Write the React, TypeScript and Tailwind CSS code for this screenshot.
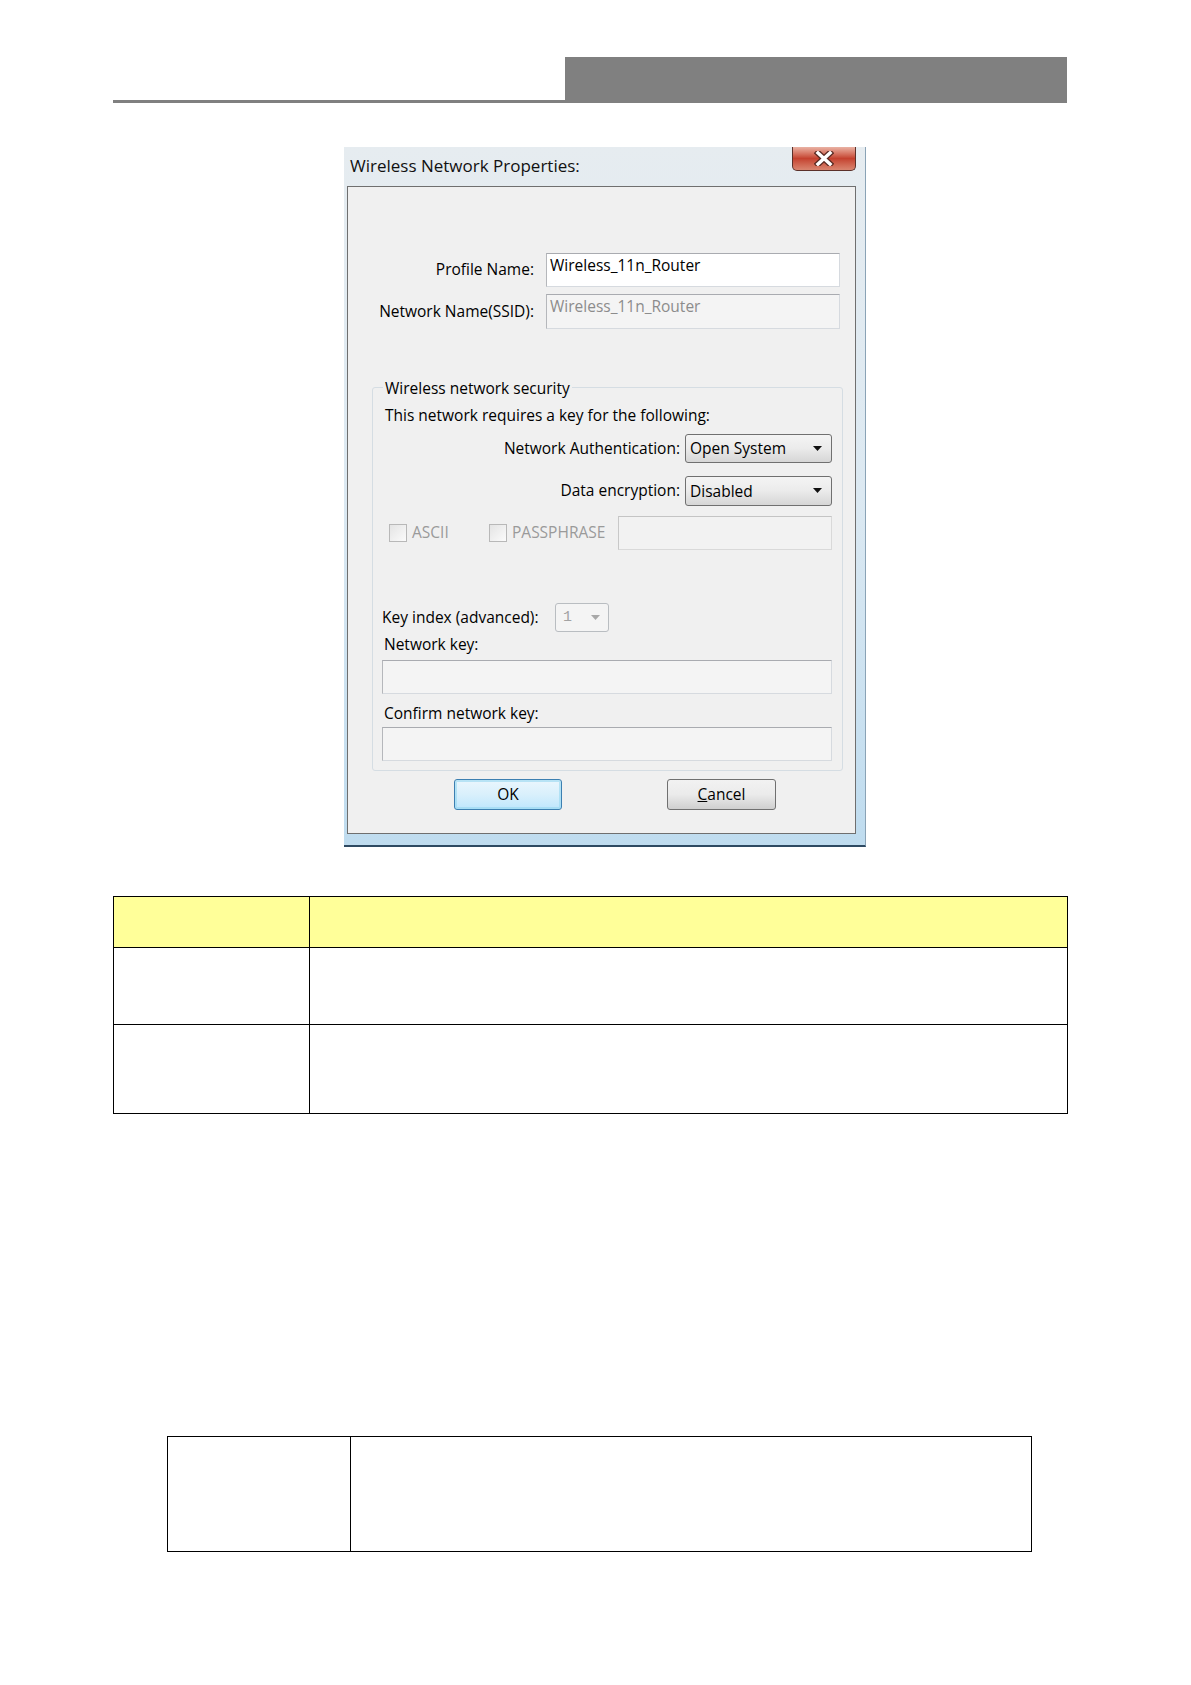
import React from 'react'

const ui = "font-['Open_Sans','Noto_Sans',sans-serif]"

function Select({ value, width }: { value: string; width: string }) {
  return (
    <div
      className={`${width} h-[29px] flex items-center justify-between pl-[4px] pr-[9px] rounded-[3px] border border-[#707070] bg-gradient-to-b from-[#f4f4f4] via-[#ebebeb] to-[#d6d6d6] text-[15.5px] text-black`}
    >
      <span className="leading-none pt-[1px]">{value}</span>
      <svg width="9" height="5" viewBox="0 0 9 5">
        <path d="M0 0h9L4.5 5z" fill="#111" />
      </svg>
    </div>
  )
}

function Checkbox({ label }: { label: string }) {
  return (
    <div className="flex items-center">
      <div className="w-[18px] h-[18px] border border-[#b8b8b8] bg-gradient-to-br from-[#e4e4e4] to-[#fbfbfb]" />
      <span className="ml-[5px] text-[15.5px] text-[#9a9a9a]">{label}</span>
    </div>
  )
}

function TextBox({ value, disabled, className }: { value?: string; disabled?: boolean; className: string }) {
  return (
    <div
      className={`${className} h-[34px] border border-[#d6dadf] border-t-[#a9abb0] border-l-[#b5b7bb] px-[3px] pt-[1px] text-[15.5px] leading-[20px] ${
        disabled ? 'bg-[#f4f4f4] text-[#8c8c8c]' : 'bg-white text-black'
      }`}
    >
      {value}
    </div>
  )
}

function Dialog() {
  return (
    <div className={`${ui} w-[522px] h-[700px] ml-[344px] mt-[44px] flex flex-col pl-[3px] pr-[9px] pb-[11px] bg-gradient-to-b from-[#e6ecf0] via-[#dce9f2] to-[#bfdcef] border-r border-r-[#8aa3b6] border-b-2 border-b-[#2e4a62]`}>
      {/* title bar */}
      <div className="h-[39px] flex items-start justify-between">
        <span className="ml-[3px] mt-[6px] text-[17px] text-[#111]">Wireless Network Properties:</span>
        <div className="w-[64px] h-[24px] rounded-b-[5px] border border-t-0 border-[#5b3029] bg-gradient-to-b from-[#e9b2a4] via-[#c4412f] to-[#d98570] flex items-center justify-center">
          <svg width="20" height="15" viewBox="0 0 20 15">
            <path d="M4 2l12 11M16 2L4 13" stroke="#5a2a22" strokeWidth="6" strokeLinecap="square" />
            <path d="M4 2l12 11M16 2L4 13" stroke="#fff" strokeWidth="3.5" strokeLinecap="square" />
          </svg>
        </div>
      </div>

      {/* client area */}
      <div className="h-[650px] border border-[#6f6f6f] bg-[#f0f0f0] text-[15.5px] text-black">
        <div className="mt-[66px] flex items-center">
          <div className="w-[186px] text-right">Profile Name:</div>
          <TextBox value="Wireless_11n_Router" className="ml-[12px] w-[294px]" />
        </div>
        <div className="mt-[7px] flex items-center">
          <div className="w-[186px] text-right">Network Name(SSID):</div>
          <TextBox value="Wireless_11n_Router" disabled className="ml-[12px] w-[294px] h-[35px]" />
        </div>

        <fieldset className="ml-[24px] mt-[49px] w-[465px] border border-[#d5dde3] rounded-[3px] px-[10px] pb-[9px]">
          <legend className="px-[2px] leading-[20px]">Wireless network security</legend>
          <div className="mt-[7px] pl-[2px] leading-[20px]">This network requires a key for the following:</div>
          <div className="mt-[9px] flex items-center justify-end">
            <span className="mr-[5px]">Network Authentication:</span>
            <Select value="Open System" width="w-[147px]" />
          </div>
          <div className="mt-[13px] flex items-center justify-end">
            <span className="mr-[5px]">Data encryption:</span>
            <Select value="Disabled" width="w-[147px] h-[30px]" />
          </div>
          <div className="mt-[10px] flex items-center">
            <div className="w-[106px] pl-[6px]">
              <Checkbox label="ASCII" />
            </div>
            <div className="flex-1">
              <Checkbox label="PASSPHRASE" />
            </div>
            <div className="w-[214px] h-[34px] border border-[#d9d9d9] border-t-[#c4c4c4] border-l-[#c8c8c8] bg-[#f2f2f2]" />
          </div>
          <div className="mt-[53px] flex items-center">
            <span className="w-[173px] -ml-[1px]">Key index (advanced):</span>
            <div className="w-[54px] h-[29px] flex items-center justify-between pl-[7px] pr-[8px] rounded-[3px] border border-[#b9bdc1] bg-[#f4f4f4]">
              <span className="font-['Liberation_Mono',monospace] text-[15px] text-[#a3a3a3] pt-[2px]">1</span>
              <svg width="9" height="5" viewBox="0 0 9 5">
                <path d="M0 0h9L4.5 5z" fill="#a8a8a8" />
              </svg>
            </div>
          </div>
          <div className="mt-[2px] pl-[1px] leading-[20px]">Network key:</div>
          <TextBox disabled className="mt-[6px] -ml-[1px] w-[450px]" />
          <div className="mt-[9px] pl-[1px] leading-[20px]">Confirm network key:</div>
          <TextBox disabled className="mt-[4px] -ml-[1px] w-[450px]" />
        </fieldset>

        <div className="mt-[8px] flex">
          <button className="ml-[106px] w-[108px] h-[31px] rounded-[3px] border border-[#3c7fb1] bg-gradient-to-b from-[#eaf6fd] via-[#d9f0fc] to-[#bee6fd] shadow-[inset_0_0_0_2px_rgba(150,215,240,0.6)] text-[15.5px] text-black">
            OK
          </button>
          <button className="ml-[105px] w-[109px] h-[31px] rounded-[3px] border border-[#707070] bg-gradient-to-b from-[#f2f2f2] via-[#ebebeb] to-[#cfcfcf] text-[15.5px] text-black">
            <span className="underline">C</span>ancel
          </button>
        </div>
      </div>
    </div>
  )
}

export default function App() {
  return (
    <div className="w-[1191px] min-h-[1685px] bg-white pt-[57px]">
      {/* page header */}
      <div className="ml-[113px] flex items-end">
        <div className="w-[452px] h-[3px] bg-[#808080]" />
        <div className="w-[502px] h-[46px] bg-[#808080]" />
      </div>

      <Dialog />

      <table className="ml-[113px] mt-[49px] w-[955px] border-collapse">
        <tbody>
          <tr className="h-[51px] bg-[#ffff99]">
            <td className="w-[196px] border border-black" />
            <td className="border border-black" />
          </tr>
          <tr className="h-[77px]">
            <td className="border border-black" />
            <td className="border border-black" />
          </tr>
          <tr className="h-[89px]">
            <td className="border border-black" />
            <td className="border border-black" />
          </tr>
        </tbody>
      </table>

      <table className="ml-[167px] mt-[322px] w-[865px] border-collapse">
        <tbody>
          <tr className="h-[115px]">
            <td className="w-[183px] border border-black" />
            <td className="border border-black" />
          </tr>
        </tbody>
      </table>
    </div>
  )
}
